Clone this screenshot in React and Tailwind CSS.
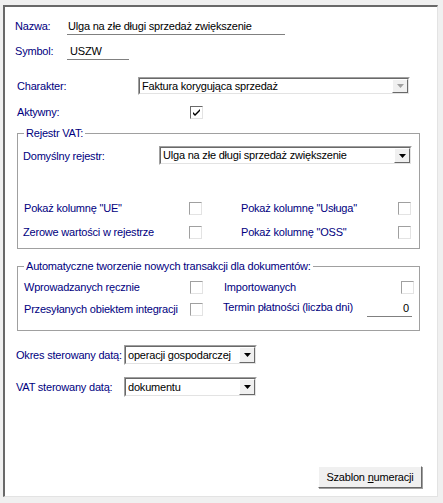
import React from 'react';

const font = { fontFamily: '"Liberation Sans", Arial, sans-serif' };

const Arrow = ({ disabled }) => (
    <div className="w-[16px] h-full bg-[#f0f0f0] border border-t-white border-l-white border-b-[#696969] border-r-[#696969] flex items-center justify-center">
        <svg width="7" height="4" viewBox="0 0 7 4">
            <path d="M0 0h7L3.5 4z" fill={disabled ? '#a0a0a0' : '#000'} />
        </svg>
    </div>
);

const Combo = ({ value, className, disabled }) => (
    <div className={`border border-t-[#a0a0a0] border-l-[#a0a0a0] border-b-white border-r-white ${className}`}>
        <div className="h-full flex border border-t-[#696969] border-l-[#696969] border-b-[#e3e3e3] border-r-[#e3e3e3] bg-white">
            <div className="flex-1 pl-[2px] flex items-center text-black truncate">{value}</div>
            <Arrow disabled={disabled} />
        </div>
    </div>
);

const Check = ({ checked }) => (
    <div className={`w-[13px] h-[13px] bg-white border ${checked ? 'border-t-[#696969] border-l-[#696969] border-b-[#e3e3e3] border-r-[#e3e3e3]' : 'border-t-[#a0a0a0] border-l-[#a0a0a0] border-b-[#e3e3e3] border-r-[#e3e3e3]'} flex items-center justify-center`}>
        {checked && (
            <svg width="9" height="9" viewBox="0 0 9 9">
                <path d="M1 4l2 2 5-5v2l-5 5-2-2z" fill="#000" />
            </svg>
        )}
    </div>
);

const Label = ({ children, className = '' }) => (
    <span className={`text-[#000080] whitespace-nowrap ${className}`}>{children}</span>
);

export default function App() {
    return (
        <div className="w-[443px] h-[503px] bg-[#f0f0f0] pt-[5px] pl-[3px] text-[11px] leading-none tracking-[-0.2px]" style={font}>
            <div className="w-[435px] h-[492px] bg-white border-t-2 border-l-2 border-t-[#696969] border-l-[#696969] border-r border-b border-r-[#e3e3e3] border-b-[#e3e3e3] flex flex-col">
                {/* Nazwa */}
                <div className="mt-[11px] pl-[10px] flex items-center h-[17px]">
                    <Label className="w-[52px]">Nazwa:</Label>
                    <div className="w-[218px] h-[17px] border-b border-[#808080] pl-[1px] flex items-center text-black">
                        Ulga na złe długi sprzedaż zwiększenie
                    </div>
                </div>

                {/* Symbol */}
                <div className="mt-[8px] pl-[10px] flex items-center h-[17px]">
                    <Label className="w-[52px]">Symbol:</Label>
                    <div className="w-[62px] h-[17px] border-b border-[#808080] pl-[3px] flex items-center text-black">
                        USZW
                    </div>
                </div>

                {/* Charakter */}
                <div className="mt-[17px] pl-[12px] flex items-center h-[18px]">
                    <Label className="w-[121px]">Charakter:</Label>
                    <Combo value="Faktura korygująca sprzedaż" className="w-[272px] h-[18px]" disabled />
                </div>

                {/* Aktywny */}
                <div className="mt-[11px] pl-[12px] flex items-center h-[13px]">
                    <Label className="w-[173px]">Aktywny:</Label>
                    <Check checked />
                </div>

                {/* Rejestr VAT */}
                <div className="relative mt-[14px] ml-[12px] w-[403px] border border-[#a0a0a0] pt-[12px] pb-[9px] pl-[5px]">
                    <span className="absolute -top-[6px] left-[6px] bg-white px-[2px] text-[#000080]">Rejestr VAT:</span>
                    <div className="flex items-center h-[19px]">
                        <Label className="w-[136px] pt-[2px]">Domyślny rejestr:</Label>
                        <Combo value="Ulga na złe długi sprzedaż zwiększenie" className="w-[253px] h-[19px]" />
                    </div>
                    <div className="mt-[37px] flex items-center h-[13px] pl-[1px]">
                        <Label className="w-[165px]">Pokaż kolumnę "UE"</Label>
                        <Check />
                        <Label className="ml-[39px] w-[157px]">Pokaż kolumnę "Usługa"</Label>
                        <Check />
                    </div>
                    <div className="mt-[11px] flex items-center h-[13px]">
                        <Label className="w-[166px]">Zerowe wartości w rejestrze</Label>
                        <Check />
                        <Label className="ml-[39px] w-[157px]">Pokaż kolumnę "OSS"</Label>
                        <Check />
                    </div>
                </div>

                {/* Automatyczne tworzenie */}
                <div className="relative mt-[17px] ml-[12px] w-[403px] border border-[#a0a0a0] pt-[14px] pb-[13px] pl-[6px]">
                    <span className="absolute -top-[6px] left-[6px] bg-white px-[2px] text-[#000080]">Automatyczne tworzenie nowych transakcji dla dokumentów:</span>
                    <div className="flex items-center h-[13px]">
                        <Label className="w-[166px]">Wprowadzanych ręcznie</Label>
                        <Check />
                        <Label className="ml-[21px] w-[177px]">Importowanych</Label>
                        <Check />
                    </div>
                    <div className="mt-[8px] flex items-end h-[15px]">
                        <div className="flex items-center h-[13px] mb-[1px]">
                            <Label className="w-[166px]">Przesyłanych obiektem integracji</Label>
                            <Check />
                        </div>
                        <Label className="ml-[20px] w-[144px] self-start">Termin płatności (liczba dni)</Label>
                        <div className="w-[45px] h-[16px] border-b border-[#808080] flex items-center justify-end pr-[3px] text-black">0</div>
                    </div>
                </div>

                {/* Okres / VAT */}
                <div className="mt-[14px] pl-[11px] flex items-center h-[20px]">
                    <Label className="w-[108px]">Okres sterowany datą:</Label>
                    <Combo value="operacji gospodarczej" className="w-[133px] h-[20px]" />
                </div>
                <div className="mt-[12px] pl-[11px] flex items-center h-[20px]">
                    <Label className="w-[108px]">VAT sterowany datą:</Label>
                    <Combo value="dokumentu" className="w-[133px] h-[20px]" />
                </div>

                <div className="flex-1" />
                <div className="flex justify-end pr-[15px] pb-[8px]">
                    <button className="w-[104px] h-[22px] bg-[#f0f0f0] border border-t-white border-l-white border-b-[#696969] border-r-[#696969] text-black text-[11px] tracking-[-0.2px] shadow-[1px_1px_0_#a0a0a0]" style={font}>
                        Szablon <span className="underline">n</span>umeracji
                    </button>
                </div>
            </div>
        </div>
    );
}
